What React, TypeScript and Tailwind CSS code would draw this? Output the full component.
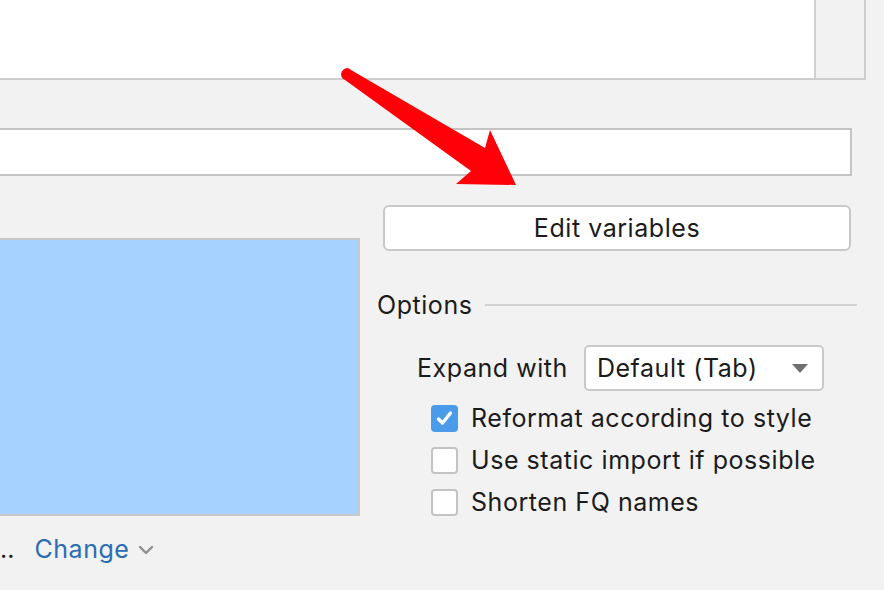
import React from "react";

const T = "text-[25px] tracking-[0.55px] text-[#1b1b1b] leading-none";

function Check({ checked, label }: { checked?: boolean; label: string }) {
  return (
    <div className="flex items-center h-[42px]">
      {checked ? (
        <div className="w-[27px] h-[27px] rounded-[4px] bg-[#4a9bea] flex items-center justify-center">
          <svg width="19" height="17" viewBox="0 0 19 17">
            <path d="M3.5 9 L7.5 13 L15.5 3" fill="none" stroke="#ffffff" strokeWidth="3.4" strokeLinecap="round" strokeLinejoin="round" />
          </svg>
        </div>
      ) : (
        <div className="w-[27px] h-[27px] rounded-[4px] bg-white border-2 border-[#c3c3c3]" />
      )}
      <span className={"ml-[13px] " + T}>{label}</span>
    </div>
  );
}

export default function App() {
  return (
    <div
      className="w-[884px] h-[590px] bg-[#f2f2f2] overflow-hidden relative"
      style={{ fontFamily: "Inter, 'Noto Sans', 'Liberation Sans', sans-serif" }}
    >
      {/* top panel */}
      <div className="flex h-[80px] w-[866px] border-b-2 border-r-2 border-[#cdcdcd]">
        <div className="flex-1 bg-white" />
        <div className="w-[50px] border-l-2 border-[#d0d0d0] bg-[#f2f2f2]" />
      </div>

      {/* text field */}
      <div className="mt-[48px] h-[48px] w-[852px] bg-white border-2 border-l-0 border-[#c4c4c4]" />

      {/* lower area */}
      <div className="flex mt-[29px]">
        <div className="w-[360px] flex flex-col">
          <div className="mt-[33px] h-[278px] bg-[#a6d2ff] border-2 border-l-0 border-[#c8c8c8]" />
          <div className="flex items-center mt-[18px] h-[30px]">
            <span className="text-[25px] text-[#1b1b1b] leading-none">..</span>
            <span className="ml-[20px] text-[25px] tracking-[0.55px] text-[#2a6db2] leading-none">Change</span>
            <svg className="ml-[9px] mt-[2px]" width="16" height="10" viewBox="0 0 16 10">
              <path d="M2 2 L8 8 L14 2" fill="none" stroke="#8e8e8e" strokeWidth="2.4" strokeLinecap="round" strokeLinejoin="round" />
            </svg>
          </div>
        </div>

        <div className="ml-[17px] w-[480px] flex flex-col">
          <div className={"ml-[6px] w-[468px] h-[46px] rounded-[6px] border-2 border-[#c9c9c9] bg-white flex items-center justify-center " + T}>
            Edit variables
          </div>

          <div className="mt-[39px] h-[30px] flex items-center">
            <span className={T}>Options</span>
            <div className="flex-1 ml-[13px] h-[2px] bg-[#d3d3d3]" />
          </div>

          <div className="mt-[25px] pl-[40px] flex items-center">
            <span className={T}>Expand with</span>
            <div className="ml-[16px] w-[240px] h-[46px] rounded-[5px] border-2 border-[#c9c9c9] bg-white flex items-center pl-[11px] pr-[14px]">
              <span className={"flex-1 " + T}>Default (Tab)</span>
              <svg width="16" height="9" viewBox="0 0 16 9">
                <path d="M0 0 L16 0 L8 9 Z" fill="#6f6f6f" />
              </svg>
            </div>
          </div>

          <div className="mt-[6px] pl-[54px] flex flex-col">
            <Check checked label="Reformat according to style" />
            <Check label="Use static import if possible" />
            <Check label="Shorten FQ names" />
          </div>
        </div>
      </div>

      {/* red annotation arrow */}
      <svg className="absolute left-0 top-0 pointer-events-none" width="884" height="590" viewBox="0 0 884 590">
        <path
          d="M347 68 Q342 69 341 74 Q341 78 345 80 L471 171 L456 184 L516 185 L490 130 L485 148 L351 70 Q349 68 347 68 Z"
          fill="#ff0008"
        />
      </svg>
    </div>
  );
}
